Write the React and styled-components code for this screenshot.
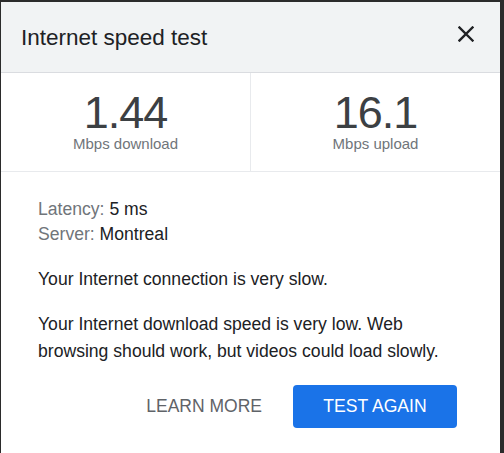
import React from 'react';
import styled, { createGlobalStyle } from 'styled-components';

const GlobalStyle = createGlobalStyle`
  html, body {
    margin: 0;
    padding: 0;
    background: #2b2b2b;
    height: 100%;
    overflow: hidden;
  }
  body {
    font-family: "Liberation Sans", Arial, sans-serif;
  }
`;

const Dialog = styled.div`
  margin: 2px 4px 0 1px;
  background: #fff;
  height: 460px;
  display: flex;
  flex-direction: column;
`;

const Header = styled.div`
  height: 70px;
  background: #f1f3f4;
  border-bottom: 1px solid #dadce0;
  display: flex;
  align-items: center;
  justify-content: space-between;
  padding: 0 24px 0 20px;
`;

const Title = styled.h1`
  margin: 0;
  font-size: 22.5px;
  font-weight: 400;
  color: #202124;
  padding-top: 2px;
`;

const CloseButton = styled.button`
  border: 0;
  background: none;
  padding: 0;
  width: 20px;
  height: 20px;
  display: flex;
  align-items: center;
  justify-content: center;
  margin-top: -6px;
  cursor: pointer;
`;

const Stats = styled.div`
  display: grid;
  grid-template-columns: 249px 1fr;
  height: 98px;
  border-bottom: 1px solid #e8eaed;
`;

const Stat = styled.div`
  display: flex;
  flex-direction: column;
  align-items: center;
  padding-top: 18px;
  border-left: ${(p) => (p.divided ? '1px solid #e8eaed' : 'none')};
`;

const Value = styled.div`
  font-size: 45px;
  line-height: 44px;
  color: #3c4043;
  letter-spacing: -1px;
`;

const Unit = styled.div`
  font-size: 15px;
  line-height: 18px;
  color: #70757a;
`;

const Body = styled.div`
  padding: 25px 37px 0 37px;
  color: #202124;
  font-size: 17.6px;
`;

const InfoLine = styled.div`
  line-height: 25px;
`;

const Label = styled.span`
  color: #70757a;
`;

const Paragraph = styled.p`
  margin: ${(p) => p.top}px 0 0 0;
  line-height: 27px;
`;

const Actions = styled.div`
  display: flex;
  justify-content: flex-end;
  align-items: center;
  gap: 31px;
  margin-top: 20px;
  padding-right: 6px;
`;

const TextButton = styled.button`
  border: 0;
  background: none;
  font-family: inherit;
  font-size: 17.5px;
  color: #5f6368;
  text-transform: uppercase;
  padding: 0;
  cursor: pointer;
`;

const PrimaryButton = styled.button`
  border: 0;
  width: 164px;
  height: 43px;
  border-radius: 4px;
  background: #1a73e8;
  color: #fff;
  font-family: inherit;
  font-size: 17.6px;
  text-transform: uppercase;
  cursor: pointer;
`;

export default function App() {
  return (
    <>
      <GlobalStyle />
      <Dialog>
        <Header>
          <Title>Internet speed test</Title>
          <CloseButton aria-label='Close'>
            <svg width='16' height='16' viewBox='0 0 16 16'>
              <path d='M1.5 1.5 L14.5 14.5 M14.5 1.5 L1.5 14.5' stroke='#202124' strokeWidth='2.4' strokeLinecap='square' />
            </svg>
          </CloseButton>
        </Header>
        <Stats>
          <Stat>
            <Value>1.44</Value>
            <Unit>Mbps download</Unit>
          </Stat>
          <Stat divided>
            <Value>16.1</Value>
            <Unit>Mbps upload</Unit>
          </Stat>
        </Stats>
        <Body>
          <InfoLine>
            <Label>Latency:</Label> 5 ms
          </InfoLine>
          <InfoLine>
            <Label>Server:</Label> Montreal
          </InfoLine>
          <Paragraph top={19}>Your Internet connection is very slow.</Paragraph>
          <Paragraph top={18}>
            Your Internet download speed is very low. Web browsing should work, but videos could load slowly.
          </Paragraph>
          <Actions>
            <TextButton>Learn more</TextButton>
            <PrimaryButton>Test again</PrimaryButton>
          </Actions>
        </Body>
      </Dialog>
    </>
  );
}
